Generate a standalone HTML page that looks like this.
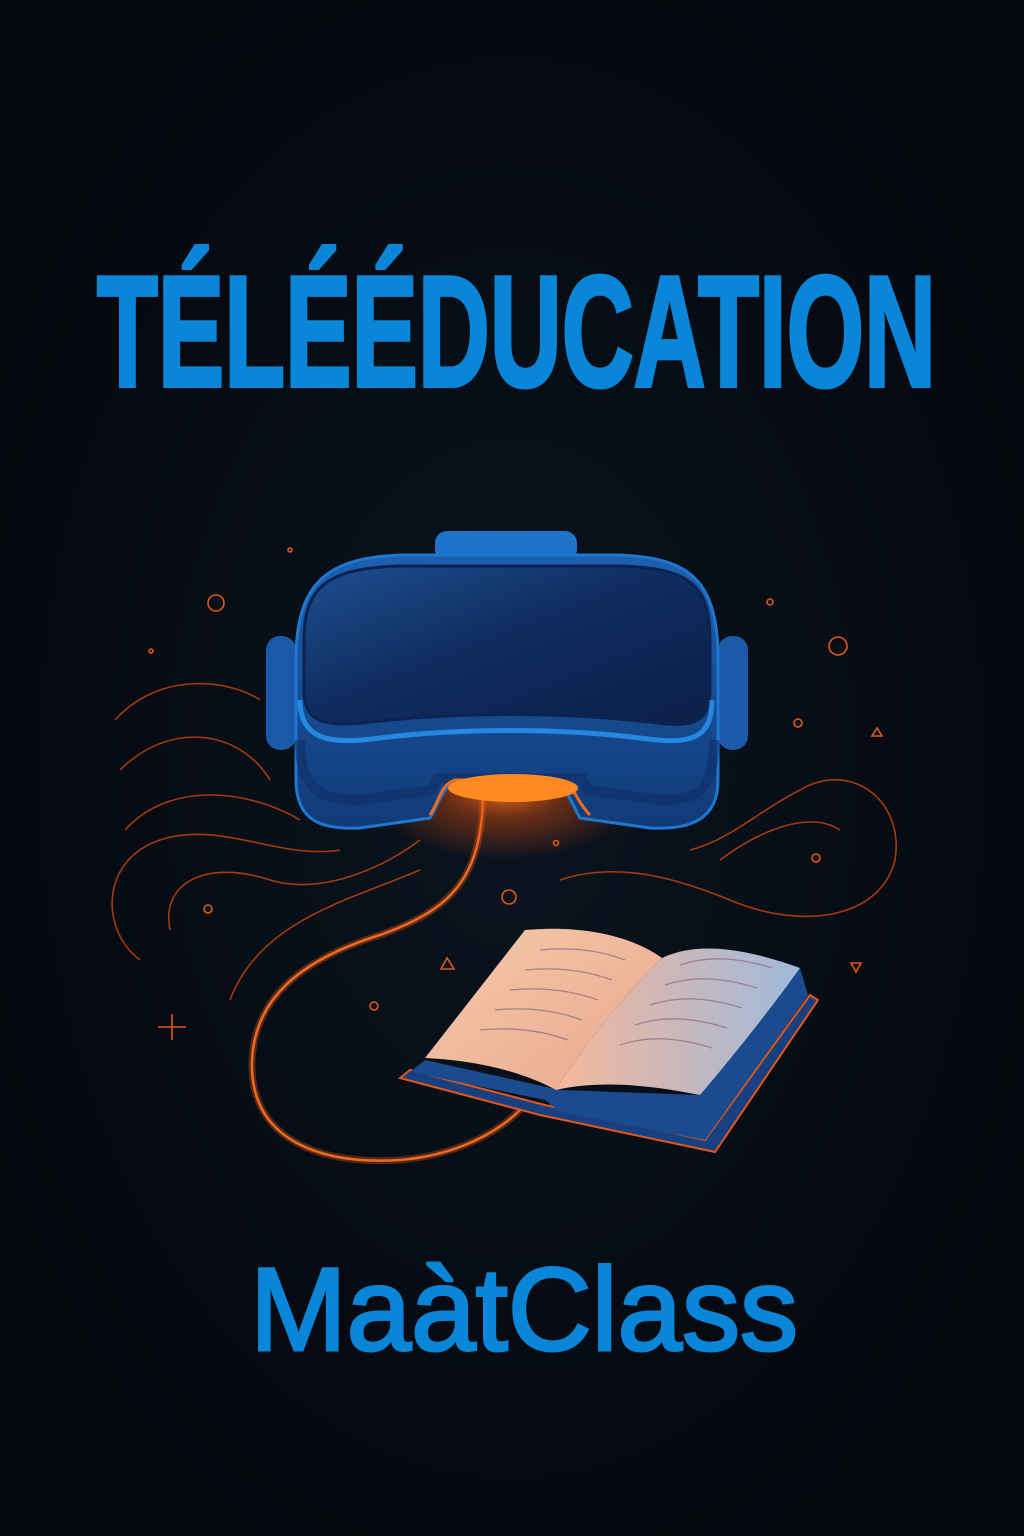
<!DOCTYPE html>
<html><head><meta charset="utf-8"><style>
html,body{margin:0;padding:0;background:#05080e;}
svg{display:block}
</style></head><body>
<svg width="1024" height="1536" viewBox="0 0 1024 1536" xmlns="http://www.w3.org/2000/svg">
<defs>
<radialGradient id="bg" cx="50%" cy="50%" r="60%">
<stop offset="0" stop-color="#0b1420"/><stop offset="1" stop-color="#04070c"/></radialGradient>
<radialGradient id="glow" cx="50%" cy="50%" r="50%">
<stop offset="0" stop-color="#ff7a1a" stop-opacity="0.9"/><stop offset="0.4" stop-color="#e0500e" stop-opacity="0.45"/><stop offset="1" stop-color="#e0500e" stop-opacity="0"/></radialGradient>
<linearGradient id="visor" x1="0" y1="0" x2="1" y2="1">
<stop offset="0" stop-color="#1e4f92"/><stop offset="0.45" stop-color="#0f2d60"/><stop offset="1" stop-color="#0b1e48"/></linearGradient>
<linearGradient id="body" x1="0" y1="0" x2="0" y2="1">
<stop offset="0" stop-color="#1c60b0"/><stop offset="1" stop-color="#123a78"/></linearGradient>
<linearGradient id="pageL" x1="0" y1="0" x2="1" y2="1">
<stop offset="0" stop-color="#f6c9a8"/><stop offset="1" stop-color="#e8a891"/></linearGradient>
<linearGradient id="pageR" x1="0" y1="0" x2="1" y2="0">
<stop offset="0" stop-color="#f4b89a"/><stop offset="1" stop-color="#9fb9dc"/></linearGradient>
</defs>
<rect width="1024" height="1536" fill="url(#bg)"/>

<text x="97" y="386" font-family="'Liberation Sans Narrow','Liberation Sans',sans-serif" font-weight="700" font-size="158" fill="#0a86d8" stroke="#0a86d8" stroke-width="4" stroke-linejoin="miter" textLength="839" lengthAdjust="spacingAndGlyphs">TÉLÉÉDUCATION</text>

<g fill="none" stroke="#c0440c" stroke-width="1.6" opacity="0.85">
<path d="M115 720 C160 670 230 680 260 700"/>
<path d="M120 770 C170 720 240 730 270 780"/>
<path d="M125 830 C170 780 250 790 300 820"/>
<path d="M140 960 C100 930 100 860 160 840 C220 820 280 860 340 850"/>
<path d="M170 930 C160 880 210 860 270 880 C320 895 380 870 420 840"/>
<path d="M230 1000 C260 920 350 900 420 870"/>
<path d="M560 880 C620 860 680 880 730 900 C800 930 880 920 895 860 C905 800 850 760 800 790 C760 810 730 840 690 850"/>
<path d="M720 860 C760 830 810 810 840 830"/>
</g>
<g fill="none" stroke="#e0581a" stroke-width="1.6">
<circle cx="216" cy="603" r="8"/><circle cx="838" cy="646" r="9"/><circle cx="509" cy="897" r="7"/>
<circle cx="798" cy="723" r="4"/><circle cx="816" cy="858" r="4"/><circle cx="208" cy="909" r="4"/>
<circle cx="374" cy="1006" r="4"/><circle cx="770" cy="602" r="3"/><circle cx="151" cy="651" r="2"/><circle cx="290" cy="550" r="2"/><circle cx="556" cy="843" r="2.5"/>
<path d="M441 969 L447 958 L454 969 Z"/><path d="M851 963 L861 963 L856 972 Z"/><path d="M872 736 L882 736 L877 728 Z"/>
<path d="M172 1014 V1040 M158 1027 H186"/>
</g>

<g fill="none">
<path d="M483 800 C480 880 450 910 380 935 C300 960 250 1000 252 1070 C255 1140 320 1165 400 1160 C460 1155 500 1130 520 1110" stroke="#e0581a" stroke-width="7" opacity="0.35"/>
<path d="M483 800 C480 880 450 910 380 935 C300 960 250 1000 252 1070 C255 1140 320 1165 400 1160 C460 1155 500 1130 520 1110" stroke="#f06a20" stroke-width="2.5"/>
</g>

<ellipse cx="505" cy="790" rx="140" ry="70" fill="url(#glow)"/>
<rect x="435" y="531" width="142" height="30" rx="12" fill="#1e73c8"/>
<rect x="266" y="636" width="30" height="114" rx="14" fill="#1a5aa8"/>
<rect x="718" y="636" width="30" height="114" rx="14" fill="#1a5aa8"/>
<path d="M296 660 C296 580 330 558 400 555 L620 555 C690 558 718 580 718 660 L718 780 C718 820 690 830 650 828 L580 818 C570 800 568 790 555 780 L455 780 C442 790 440 800 430 818 L360 828 C320 830 296 820 296 780 Z" fill="url(#body)" stroke="#1e78d0" stroke-width="3"/>
<path d="M300 740 C300 790 320 800 360 800 L432 790 L438 778 L582 778 L588 790 L660 800 C700 800 714 790 714 740" fill="none" stroke="#0f2f66" stroke-width="10" opacity="0.6"/>
<path d="M304 640 C304 585 330 568 400 566 L620 566 C690 568 710 585 710 640 L710 690 C710 725 690 728 650 722 C560 712 460 712 370 722 C320 728 304 720 304 690 Z" fill="url(#visor)" stroke="#0c2352" stroke-width="3"/>
<path d="M300 700 C300 740 330 745 380 738 C460 728 560 728 640 738 C690 745 712 740 712 700" fill="none" stroke="#2488e0" stroke-width="5"/>
<path d="M430 815 C440 800 440 785 455 780 L560 780 C575 785 575 800 590 815" fill="none" stroke="#f06a20" stroke-width="3"/>
<ellipse cx="513" cy="788" rx="65" ry="14" fill="#ff8a22"/>

<path d="M400 1078 L540 1115 L715 1152 L818 1000 L810 995 L705 1140 L545 1105 L410 1070 Z" fill="#183f80" stroke="#e0581a" stroke-width="2"/>
<path d="M410 1072 L545 1100 L560 1112 L705 1140 L808 995 L800 968 L700 1095 L560 1090 L425 1060 Z" fill="#1b4a8e"/>
<path d="M425 1058 L525 930 C580 925 630 935 662 958 C620 1000 580 1050 556 1090 C520 1070 470 1060 425 1058 Z" fill="url(#pageL)"/>
<path d="M556 1090 C580 1050 620 1000 662 958 C700 940 750 950 800 968 C770 1010 730 1060 700 1095 C650 1085 600 1080 556 1090 Z" fill="url(#pageR)"/>
<g stroke="#8a6a80" stroke-width="1.3" fill="none" opacity="0.7">
<path d="M540 950 C570 947 600 950 625 960"/><path d="M525 970 C555 967 585 970 612 980"/><path d="M510 990 C540 987 570 990 598 1000"/><path d="M495 1010 C525 1007 555 1010 582 1020"/><path d="M480 1030 C510 1027 540 1030 568 1040"/>
<path d="M680 965 C710 955 740 958 772 968"/><path d="M665 985 C695 975 725 978 757 988"/><path d="M650 1005 C680 995 710 998 742 1008"/><path d="M635 1025 C665 1015 695 1018 727 1028"/><path d="M620 1045 C650 1035 680 1038 712 1048"/>
</g>

<text x="250" y="1350" font-family="'Liberation Sans',sans-serif" font-weight="400" font-size="118" fill="#0a86d8" stroke="#0a86d8" stroke-width="3" textLength="548" lengthAdjust="spacingAndGlyphs">MaàtClass</text>
</svg>
</body></html>
